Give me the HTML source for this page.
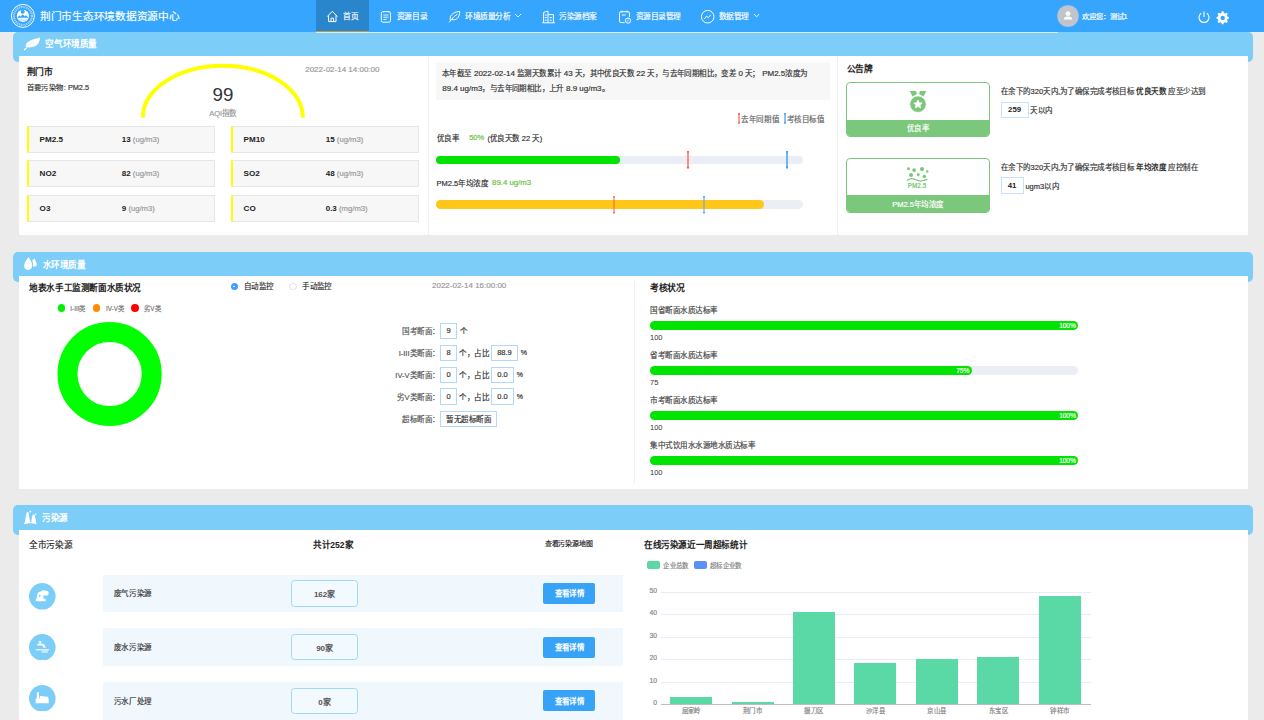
<!DOCTYPE html>
<html lang="zh-CN"><head><meta charset="utf-8">
<style>
*{margin:0;padding:0;box-sizing:border-box}
html,body{width:1264px;height:720px;overflow:hidden;background:#ebebeb;font-family:"Liberation Sans",sans-serif;color:#333}
.a{position:absolute}
.t{position:absolute;white-space:nowrap;line-height:12px;-webkit-text-stroke:0.18px currentColor}
.t b,.t[style*=bold]{-webkit-text-stroke:0}
.band{position:absolute;left:13px;width:1240px;height:30px;background:#7ccdf8;border-radius:5px}
.panel{position:absolute;left:19px;width:1229px;background:#fff}
#hdr{position:absolute;left:0;top:0;width:1264px;height:32px;background:#35a5fd}
</style></head><body>
<div id="hdr">
<svg class="a" style="left:0;top:0" width="40" height="32" viewBox="0 0 40 32">
<circle cx="22.9" cy="15.9" r="11.5" fill="none" stroke="#fff" stroke-width="1"/>
<circle cx="22.9" cy="15.9" r="9" fill="none" stroke="#f0f8ff" stroke-width="2.3" stroke-dasharray="1.1 0.8" opacity="0.62"/>
<circle cx="22.9" cy="15.9" r="6.9" fill="#35a5fd"/>
<circle cx="22.9" cy="15.9" r="6.1" fill="#fff"/>
<circle cx="22.7" cy="11.8" r="2" fill="#35a5fd"/>
<path d="M17.2 17.8 L19.2 15.4 L20.6 16.4 L22.6 14.2 L24.6 16.2 L26 15.2 L28.6 17.8 Z" fill="#35a5fd"/>
<path d="M18.4 19.2 H27.4 M19.4 20.6 H26.4" stroke="#9dd2fe" stroke-width="0.6"/>
</svg>
<div class="a" style="left:316px;top:0;width:53px;height:31px;background:#2a86cc"></div>
<div class="a" style="left:316px;top:32px;width:741.5px;height:1px;background:#e2eaef;z-index:2"></div>
<div class="a" style="left:316px;top:31px;width:53px;height:1px;background:#c49a3e"></div>
<svg class="a" style="left:326px;top:10px" width="13" height="13" viewBox="0 0 13 13">
<path d="M1.2 6.6 L6.3 1.3 L11.4 6.6 M2.6 5.4 V11.6 H10 V5.4 M5 11.6 V8.2 H7.6 V11.6" fill="none" stroke="#fff" stroke-width="1" stroke-linejoin="round"/>
</svg>
<svg class="a" style="left:380px;top:10px" width="12" height="13" viewBox="0 0 12 13">
<rect x="1.3" y="1.6" width="9.2" height="10.6" rx="1.6" fill="none" stroke="#fff" stroke-width="1"/>
<path d="M3.6 1 V2.4 M8.2 1 V2.4 M3.4 5 H8.4 M3.4 7.2 H8.4 M3.4 9.4 H6.6" stroke="#fff" stroke-width="0.9"/>
</svg>
<svg class="a" style="left:448px;top:10px" width="13" height="13" viewBox="0 0 13 13">
<path d="M1.3 12 L3.6 9.4 M2.4 10.6 C1 7 3.5 2 11.8 1.4 C11.6 7.6 8.6 11 3.4 9.6 M3.6 9.4 C5.4 7 7 5.6 9.2 4.4" fill="none" stroke="#fff" stroke-width="1" stroke-linecap="round"/>
</svg>
<svg class="a" style="left:514px;top:13px" width="8" height="5" viewBox="0 0 8 5"><path d="M1 1 L4 4 L7 1" fill="none" stroke="#fff" stroke-width="0.9"/></svg>
<svg class="a" style="left:541px;top:10px" width="15" height="14" viewBox="0 0 15 14">
<path d="M1.3 12.8 H13.8 M2.6 12.8 V2.4 L7 1 V12.8 M7 4.6 H12.4 V12.8 M3.8 5 H5.8 M3.8 7.6 H5.8 M3.8 10.2 H5.8 M8.6 7.6 H10.8 M8.6 10.2 H10.8" fill="none" stroke="#fff" stroke-width="1"/>
</svg>
<svg class="a" style="left:618px;top:10px" width="14" height="14" viewBox="0 0 14 14">
<path d="M6.5 12.6 H3 A1.5 1.5 0 0 1 1.5 11.1 V3.2 A1.5 1.5 0 0 1 3 1.7 H10 A1.5 1.5 0 0 1 11.5 3.2 V7" fill="none" stroke="#fff" stroke-width="1"/>
<path d="M4 0.6 V2.6 M9 0.6 V2.6 M3.8 5 H7.6" stroke="#fff" stroke-width="1"/>
<circle cx="10" cy="10.6" r="2.6" fill="none" stroke="#fff" stroke-width="1"/>
<path d="M8.9 11.4 L10.9 9.6" stroke="#fff" stroke-width="0.8"/>
</svg>
<svg class="a" style="left:700px;top:9px" width="16" height="16" viewBox="0 0 16 16">
<circle cx="7.7" cy="7.7" r="6.3" fill="none" stroke="#fff" stroke-width="1"/>
<path d="M4.4 9.8 L6.6 7.2 L8.2 8.6 L10.8 5.8" fill="none" stroke="#fff" stroke-width="1"/>
</svg>
<svg class="a" style="left:753px;top:13px" width="8" height="5" viewBox="0 0 8 5"><path d="M1 1 L3.6 3.8 L6.2 1" fill="none" stroke="#fff" stroke-width="0.9"/></svg>
<svg class="a" style="left:1057px;top:5px" width="23" height="23" viewBox="0 0 23 23">
<circle cx="11" cy="11" r="10.8" fill="#c0c4cc"/>
<circle cx="11" cy="8.6" r="2.4" fill="#fff"/>
<path d="M6.8 14.6 C6.8 12.2 8.6 11.6 11 11.6 C13.4 11.6 15.2 12.2 15.2 14.6 Z" fill="#fff"/>
</svg>
<svg class="a" style="left:1197px;top:10px" width="14" height="14" viewBox="0 0 14 14">
<path d="M4.2 3.3 A5 5 0 1 0 9.8 3.3" fill="none" stroke="#fff" stroke-width="1.15"/>
<path d="M7 1.6 V7" stroke="#fff" stroke-width="1.15"/>
</svg>
<svg class="a" style="left:1216px;top:11px" width="14" height="14" viewBox="0 0 14 14">
<path d="M6 0.4 H8 L8.4 2.2 L9.9 2.9 L11.5 1.9 L12.9 3.3 L11.9 4.9 L12.5 6.4 L14 6.8 V8.8 L12.5 9.2 L11.9 10.7 L12.9 12.3 L11.5 13.7 L9.9 12.7 L8.4 13.4 L8 15 H6 L5.6 13.4 L4.1 12.7 L2.5 13.7 L1.1 12.3 L2.1 10.7 L1.5 9.2 L0 8.8 V6.8 L1.5 6.4 L2.1 4.9 L1.1 3.3 L2.5 1.9 L4.1 2.9 L5.6 2.2 Z" transform="translate(0.5 0) scale(0.88)" fill="#fff"/>
<circle cx="6.7" cy="6.9" r="2.2" fill="#35a5fd"/>
</svg>
</div>
<div class="t" style="left:40px;top:9.90px;font-size:10.7px;color:#fff;"><span style="letter-spacing:-0.27px;">荆门市生态环境数据资源中心</span></div>
<div class="t" style="left:343.1px;top:11.30px;font-size:7.7px;color:#fff;"><span style="letter-spacing:-0.28px;">首页</span></div>
<div class="t" style="left:396.7px;top:11.30px;font-size:7.7px;color:#fff;"><span style="letter-spacing:-0.392px;">资源目录</span></div>
<div class="t" style="left:465px;top:11.30px;font-size:7.7px;color:#fff;"><span style="letter-spacing:-0.445px;">环境质量分析</span></div>
<div class="t" style="left:559px;top:11.30px;font-size:7.7px;color:#fff;"><span style="letter-spacing:-0.394px;">污染源档案</span></div>
<div class="t" style="left:635.6px;top:11.30px;font-size:7.7px;color:#fff;"><span style="letter-spacing:-0.513px;">资源目录管理</span></div>
<div class="t" style="left:718.5px;top:11.30px;font-size:7.7px;color:#fff;"><span style="letter-spacing:-0.494px;">数据管理</span></div>
<div class="t" style="left:1081.9px;top:11.30px;font-size:7.3px;color:#fff;"><span style="letter-spacing:-0.05px;">欢迎您：测试</span>1</div>
<div class="band" style="top:32px"></div>
<div class="panel" style="top:56px;height:179px"></div>
<div class="band" style="top:252px"></div>
<div class="panel" style="top:276px;height:213px"></div>
<div class="band" style="top:505px"></div>
<div class="panel" style="top:530px;height:190px"></div>
<svg class="a" style="left:23px;top:36px" width="18" height="16" viewBox="0 0 18 16">
<path d="M3.2 11.6 C2.2 9.4 3 7.4 5 6 C7.6 4 11 3.4 13.4 2.6 C15 2.1 16.2 1.8 17 1.2 C17 4.4 16 8 12.6 10 C9.6 11.6 6 11.2 3.2 11.6 Z" fill="#fff"/>
<path d="M3 12.2 L1.4 13.8" stroke="#fff" stroke-width="1.3" stroke-linecap="round"/>
<path d="M4.6 9.6 C6.4 8 8.6 7.2 11 6.6" fill="none" stroke="#b9e4fb" stroke-width="0.5"/>
</svg>
<div class="t" style="left:45.3px;top:37.90px;font-size:8.6px;color:#fff;font-weight:bold;"><span style="letter-spacing:-0.37px;">空气环境质量</span></div>
<svg class="a" style="left:23px;top:256px" width="15" height="15" viewBox="0 0 15 15">
<path d="M11.4 2.4 C12.4 4.2 13.8 6.4 13.8 8.4 C13.8 9.8 13 10.6 11.6 10.6 L10 10.6 C10.4 8.4 10 6 9 4.8 Z" fill="#fff"/>
<path d="M5.5 1 C7 3.6 9.2 6.2 9.2 9.6 C9.2 12.2 7.4 14 5.1 14 C2.8 14 1.1 12.2 1.1 9.8 C1.1 6.4 4 3.6 5.5 1 Z" fill="#fff" stroke="#7ccdf8" stroke-width="1.1" paint-order="stroke"/>
<path d="M3.8 11.6 C4.4 12.4 5.4 12.6 6.4 12.4" fill="none" stroke="#d6f0fd" stroke-width="0.6"/>
</svg>
<div class="t" style="left:42.7px;top:258.60px;font-size:8.6px;color:#fff;font-weight:bold;"><span style="letter-spacing:-0.44px;">水环境质量</span></div>
<svg class="a" style="left:23px;top:510px" width="15" height="16" viewBox="0 0 15 16">
<path d="M1.2 14.2 C1.8 11.6 2.6 8 3 5.4 C3.4 3.6 3.6 2.6 4.4 2 L5.6 2.2 C6 5.6 6.6 9.6 7.2 12.2 L8.2 12.2 C8.6 9.6 9.2 6.4 9.6 4.8 L11.8 4.6 C12.2 7.6 12.8 11.2 13.6 14.2 C9.4 13 5.4 13 1.2 14.2 Z" fill="#fff"/>
<circle cx="7.4" cy="1.6" r="0.9" fill="#fff"/><circle cx="12.6" cy="4.2" r="0.8" fill="#fff"/>
<path d="M3.1 6.4 H4.6" stroke="#d6f0fd" stroke-width="0.5"/>
</svg>
<div class="t" style="left:42.2px;top:512.40px;font-size:8.6px;color:#fff;font-weight:bold;"><span style="letter-spacing:-0.5px;">污染源</span></div>
<div class="a" style="left:428px;top:56px;width:1px;height:179px;background:#f0f0f0;"></div>
<div class="a" style="left:837px;top:56px;width:1px;height:179px;background:#f0f0f0;"></div>
<div class="t" style="left:26.6px;top:66.00px;font-size:8.75px;color:#222;font-weight:bold;"><span style="letter-spacing:-0.16px;">荆门市</span></div>
<div class="t" style="left:26.6px;top:82.30px;font-size:7.3px;color:#333;"><span style="letter-spacing:0.45px;">首要污染物</span>: PM2.5</div>
<svg class="a" style="left:130px;top:56px" width="190" height="70" viewBox="0 0 190 70">
<path d="M12.8 61.7 A80 52 0 0 1 172.8 61.7" fill="none" stroke="#ffff00" stroke-width="4"/>
</svg>
<div class="t" style="left:212.5px;top:85px;font-size:18.75px;line-height:20px;color:#333;-webkit-text-stroke:0">99</div>
<div class="t" style="left:209.2px;top:107.90px;font-size:7.5px;color:#999;">AQI<span style="letter-spacing:0.3px;">指数</span></div>
<div class="t" style="left:305.2px;top:63.60px;font-size:8px;color:#999;">2022-02-14 14:00:00</div>
<div class="a" style="left:27px;top:126px;width:188.3px;height:27px;background:#f7f7f7;border:1px solid #e6e6e6;border-left:2px solid #ffff00"></div>
<div class="t" style="left:39.6px;top:133.80px;font-size:8.1px;color:#222;font-weight:bold;">PM2.5</div>
<div class="t" style="left:121.7px;top:133.8px;font-size:8px;color:#222"><b>13</b> <span style="color:#999;font-size:7.7px">(ug/m3)</span></div>
<div class="a" style="left:231px;top:126px;width:188.3px;height:27px;background:#f7f7f7;border:1px solid #e6e6e6;border-left:2px solid #ffff00"></div>
<div class="t" style="left:243.6px;top:133.80px;font-size:8.1px;color:#222;font-weight:bold;">PM10</div>
<div class="t" style="left:325.7px;top:133.8px;font-size:8px;color:#222"><b>15</b> <span style="color:#999;font-size:7.7px">(ug/m3)</span></div>
<div class="a" style="left:27px;top:160px;width:188.3px;height:27px;background:#f7f7f7;border:1px solid #e6e6e6;border-left:2px solid #ffff00"></div>
<div class="t" style="left:39.6px;top:167.80px;font-size:8.1px;color:#222;font-weight:bold;">NO2</div>
<div class="t" style="left:121.7px;top:167.8px;font-size:8px;color:#222"><b>82</b> <span style="color:#999;font-size:7.7px">(ug/m3)</span></div>
<div class="a" style="left:231px;top:160px;width:188.3px;height:27px;background:#f7f7f7;border:1px solid #e6e6e6;border-left:2px solid #ffff00"></div>
<div class="t" style="left:243.6px;top:167.80px;font-size:8.1px;color:#222;font-weight:bold;">SO2</div>
<div class="t" style="left:325.7px;top:167.8px;font-size:8px;color:#222"><b>48</b> <span style="color:#999;font-size:7.7px">(ug/m3)</span></div>
<div class="a" style="left:27px;top:195px;width:188.3px;height:27px;background:#f7f7f7;border:1px solid #e6e6e6;border-left:2px solid #ffff00"></div>
<div class="t" style="left:39.6px;top:202.80px;font-size:8.1px;color:#222;font-weight:bold;">O3</div>
<div class="t" style="left:121.7px;top:202.8px;font-size:8px;color:#222"><b>9</b> <span style="color:#999;font-size:7.7px">(ug/m3)</span></div>
<div class="a" style="left:231px;top:195px;width:188.3px;height:27px;background:#f7f7f7;border:1px solid #e6e6e6;border-left:2px solid #ffff00"></div>
<div class="t" style="left:243.6px;top:202.80px;font-size:8.1px;color:#222;font-weight:bold;">CO</div>
<div class="t" style="left:325.7px;top:202.8px;font-size:8px;color:#222"><b>0.3</b> <span style="color:#999;font-size:7.7px">(mg/m3)</span></div>
<div class="a" style="left:436px;top:62px;width:394px;height:38px;background:#f7f7f7;"></div>
<div class="t" style="left:442.1px;top:68.30px;font-size:8px;color:#333;"><span style="letter-spacing:0.4px;font-size:7.5px;">本年截至</span> 2022-02-14 <span style="letter-spacing:0.4px;font-size:7.5px;">监测天数累计</span> 43 <span style="letter-spacing:0.4px;font-size:7.5px;">天，其中优良天数</span> 22 <span style="letter-spacing:0.4px;font-size:7.5px;">天，与去年同期相比，变差</span> 0 <span style="letter-spacing:0.4px;font-size:7.5px;">天；</span> PM2.5<span style="letter-spacing:0.4px;font-size:7.5px;">浓度为</span></div>
<div class="t" style="left:442.3px;top:82.50px;font-size:8px;color:#333;">89.4 ug/m3<span style="letter-spacing:0.4px;font-size:7.5px;">，与去年同期相比，上升</span> 8.9 ug/m3<span style="letter-spacing:0.4px;font-size:7.5px;">。</span></div>
<svg class="a" style="left:736.3px;top:112.2px" width="6" height="12.700000000000003" viewBox="0 0 6 12.700000000000003"><rect x="2.45" y="1" width="1.1" height="10.700000000000003" fill="#f5584a"/><ellipse cx="3" cy="1.9" rx="0.8" ry="0.9" fill="#f5584a"/><ellipse cx="3" cy="10.800000000000002" rx="0.8" ry="0.9" fill="#f5584a"/></svg>
<div class="t" style="left:741.3px;top:114.40px;font-size:7.5px;color:#666;"><span style="letter-spacing:0.6px;">去年同期值</span></div>
<svg class="a" style="left:781.6px;top:112.2px" width="6" height="12.700000000000003" viewBox="0 0 6 12.700000000000003"><rect x="2.4" y="1" width="1.2" height="10.700000000000003" fill="#3a9dfa"/><ellipse cx="3" cy="1.9" rx="0.8" ry="0.9" fill="#3a9dfa"/><ellipse cx="3" cy="10.800000000000002" rx="0.8" ry="0.9" fill="#3a9dfa"/></svg>
<div class="t" style="left:786.9px;top:114.40px;font-size:7.5px;color:#666;"><span style="letter-spacing:0.45px;">考核目标值</span></div>
<div class="t" style="left:436.6px;top:133.10px;font-size:7.5px;color:#333;"><span style="letter-spacing:0.55px;">优良率</span></div>
<div class="t" style="left:469.2px;top:132.20px;font-size:7.5px;color:#67c23a;">50%</div>
<div class="t" style="left:487.4px;top:133.10px;font-size:7.5px;color:#333;">(<span style="letter-spacing:0.45px;">优良天数</span> 22 <span style="letter-spacing:0.45px;">天</span>)</div>
<div class="a" style="left:436px;top:156px;width:367px;height:8px;border-radius:4px;background:#ebeef5"></div>
<div class="a" style="left:436px;top:156px;width:184px;height:8px;border-radius:4px;background:#00e400"></div>
<svg class="a" style="left:685.4px;top:150.3px" width="6" height="19.399999999999977" viewBox="0 0 6 19.399999999999977"><rect x="2.4" y="1" width="1.2" height="17.399999999999977" fill="#f5584a"/><ellipse cx="3" cy="1.9" rx="1.1" ry="0.9" fill="#f5584a"/><ellipse cx="3" cy="17.49999999999998" rx="1.1" ry="0.9" fill="#f5584a"/></svg>
<svg class="a" style="left:783.6px;top:150.3px" width="6" height="19.399999999999977" viewBox="0 0 6 19.399999999999977"><rect x="2.3" y="1" width="1.4" height="17.399999999999977" fill="#3a9dfa"/><ellipse cx="3" cy="1.9" rx="1.1" ry="0.9" fill="#3a9dfa"/><ellipse cx="3" cy="17.49999999999998" rx="1.1" ry="0.9" fill="#3a9dfa"/></svg>
<div class="t" style="left:436.6px;top:177.80px;font-size:7.5px;color:#333;">PM2.5<span style="letter-spacing:0.5px;">年均浓度</span></div>
<div class="t" style="left:492.1px;top:176.90px;font-size:7.8px;color:#67c23a;">89.4 ug/m3</div>
<div class="a" style="left:436px;top:200px;width:367px;height:9px;border-radius:4.5px;background:#ebeef5"></div>
<div class="a" style="left:436px;top:200px;width:328px;height:9px;border-radius:4.5px;background:#ffc71a"></div>
<svg class="a" style="left:610.9px;top:194.7px" width="6" height="19.400000000000006" viewBox="0 0 6 19.400000000000006"><rect x="2.55" y="1" width="0.9" height="17.400000000000006" fill="#f5584a"/><ellipse cx="3" cy="1.9" rx="0.8" ry="0.9" fill="#f5584a"/><ellipse cx="3" cy="17.500000000000007" rx="0.8" ry="0.9" fill="#f5584a"/></svg>
<svg class="a" style="left:701px;top:194.7px" width="6" height="19.400000000000006" viewBox="0 0 6 19.400000000000006"><rect x="2.55" y="1" width="0.9" height="17.400000000000006" fill="#3a9dfa"/><ellipse cx="3" cy="1.9" rx="0.8" ry="0.9" fill="#3a9dfa"/><ellipse cx="3" cy="17.500000000000007" rx="0.8" ry="0.9" fill="#3a9dfa"/></svg>
<div class="t" style="left:846.7px;top:62.60px;font-size:8.75px;color:#222;font-weight:bold;"><span style="letter-spacing:-0.3px;">公告牌</span></div>
<div class="a" style="left:846px;top:82px;width:144px;height:55px;border:1px solid #7bc77b;border-radius:4px;background:#fff;overflow:hidden"><div class="a" style="left:0;top:37px;width:142px;height:17px;background:#7bc77b"></div></div>
<div class="t" style="left:718px;width:400px;text-align:center;top:123.40px;font-size:7.5px;color:#fff;"><span style="letter-spacing:0.5px;">优良率</span></div>
<div class="t" style="left:1000.9px;top:86px;font-size:7.5px;color:#333"><span style="letter-spacing:0.42px;">在余下的</span>320<span style="letter-spacing:0.42px;">天内</span>,<span style="letter-spacing:0.42px;">为了确保完成考核目标</span> <b><span style="letter-spacing:0.5px;">优良天数</span></b> <span style="letter-spacing:0.42px;">应至少达到</span></div>
<div class="a" style="left:1000.6px;top:101.8px;width:28px;height:16.6px;border:1px solid #c6e2ff;background:#fff"></div>
<div class="t" style="left:814.6px;width:400px;text-align:center;top:104.10px;font-size:7.8px;color:#222;font-weight:bold;">259</div>
<div class="t" style="left:1030.3999999999999px;top:105.00px;font-size:7.5px;color:#333;"><span style="letter-spacing:0.4px;">天以内</span></div>
<div class="a" style="left:846px;top:158px;width:144px;height:55px;border:1px solid #7bc77b;border-radius:4px;background:#fff;overflow:hidden"><div class="a" style="left:0;top:36px;width:142px;height:18px;background:#7bc77b"></div></div>
<div class="t" style="left:718px;width:400px;text-align:center;top:198.90px;font-size:7.5px;color:#fff;">PM2.5<span style="letter-spacing:0.5px;">年均浓度</span></div>
<div class="t" style="left:1000.9px;top:162.2px;font-size:7.5px;color:#333"><span style="letter-spacing:0.42px;">在余下的</span>320<span style="letter-spacing:0.42px;">天内</span>,<span style="letter-spacing:0.42px;">为了确保完成考核目标</span> <b><span style="letter-spacing:0.5px;">年均浓度</span></b> <span style="letter-spacing:0.42px;">应控制在</span></div>
<div class="a" style="left:1000.6px;top:177.3px;width:23px;height:16.9px;border:1px solid #c6e2ff;background:#fff"></div>
<div class="t" style="left:812.1px;width:400px;text-align:center;top:179.75px;font-size:7.8px;color:#222;font-weight:bold;">41</div>
<div class="t" style="left:1025.4px;top:180.65px;font-size:7.5px;color:#333;">ugm3<span style="letter-spacing:0.4px;">以内</span></div>
<svg class="a" style="left:906px;top:89px" width="24" height="26" viewBox="0 0 24 26">
<path d="M3.8 2 H9.9 L10.9 5.1 L6.5 7.4 Z M14 2 H20.3 L17.6 7.4 L13 5.1 Z" fill="#7bc77b"/>
<circle cx="12" cy="15.2" r="8.2" fill="#7bc77b" stroke="#fff" stroke-width="0.6"/>
<path d="M12 11 L13.3 13.8 L16.2 14.1 L14 16.1 L14.7 19 L12 17.5 L9.3 19 L10 16.1 L7.8 14.1 L10.7 13.8 Z" fill="#fff" stroke="#fff" stroke-width="0.7" stroke-linejoin="round"/>
</svg>
<svg class="a" style="left:905px;top:165px" width="26" height="20" viewBox="0 0 26 20">
<circle cx="3.46" cy="3.67" r="1.46" fill="#7bc77b"/><circle cx="9.1" cy="5.1" r="1.9" fill="#7bc77b"/>
<circle cx="17" cy="4.1" r="2.1" fill="#7bc77b"/><circle cx="22.2" cy="6.4" r="1.25" fill="#7bc77b"/>
<circle cx="6" cy="9.9" r="2" fill="#7bc77b"/><circle cx="13.25" cy="9.7" r="1.46" fill="#7bc77b"/>
<circle cx="19.3" cy="11.4" r="1.75" fill="#7bc77b"/>
<path d="M2.4 15.3 C4.6 13.6 6.8 13.2 9.4 14.2 C11.8 15.2 13.8 16.2 16 16 C18.4 15.8 20.4 15.2 22 14.4" fill="none" stroke="#7bc77b" stroke-width="1.25" stroke-linecap="round"/>
</svg>
<div class="t" style="left:717px;width:400px;text-align:center;top:179.60px;font-size:6.4px;color:#7bc77b;font-weight:bold;">PM2.5</div>
<div class="t" style="left:29.3px;top:282.40px;font-size:8.6px;color:#222;font-weight:bold;"><span style="letter-spacing:-0.42px;">地表水手工监测断面水质状况</span></div>
<div class="a" style="left:57.5px;top:304.1px;width:7.8px;height:7.8px;border-radius:50%;background:#00f000"></div>
<div class="t" style="left:70.3px;top:302.90px;font-size:6.3px;color:#777;">I-III<span style="letter-spacing:0.3px;">类</span></div>
<div class="a" style="left:92.6px;top:304.1px;width:7.8px;height:7.8px;border-radius:50%;background:#ff8c00"></div>
<div class="t" style="left:106px;top:302.90px;font-size:6.3px;color:#777;">IV-V<span style="letter-spacing:0.3px;">类</span></div>
<div class="a" style="left:130.9px;top:304.1px;width:7.8px;height:7.8px;border-radius:50%;background:#ff0000"></div>
<div class="t" style="left:144px;top:302.90px;font-size:6.3px;color:#777;"><span style="letter-spacing:0.3px;">劣</span>V<span style="letter-spacing:0.3px;">类</span></div>
<svg class="a" style="left:55px;top:320px" width="110" height="110" viewBox="0 0 110 110">
<circle cx="54.6" cy="54" r="42.1" fill="none" stroke="#00ff00" stroke-width="20"/>
</svg>
<div class="a" style="left:230.6px;top:282.9px;width:7.3px;height:7.3px;border-radius:50%;background:#409eff"></div>
<div class="a" style="left:233.3px;top:285.6px;width:1.9px;height:1.9px;border-radius:50%;background:#fff"></div>
<div class="t" style="left:244px;top:281.40px;font-size:7.5px;color:#333;"><span style="letter-spacing:0.3px;">自动监控</span></div>
<div class="a" style="left:289.3px;top:282.9px;width:7.3px;height:7.3px;border-radius:50%;border:0.7px solid #dcdfe6;background:#fff"></div>
<div class="t" style="left:302.4px;top:281.40px;font-size:7.5px;color:#333;"><span style="letter-spacing:0.35px;">手动监控</span></div>
<div class="t" style="left:432px;top:280.40px;font-size:8px;color:#999;">2022-02-14 16:00:00</div>
<div class="t" style="right:824.5px;top:326.10px;font-size:7.5px;color:#555;"><span style="letter-spacing:0.5px;">国考断面：</span></div>
<div class="a" style="left:440.3px;top:322.8px;width:16.4px;height:16.6px;border:1px solid #b3d8ff;background:#fff"></div>
<div class="t" style="left:248.5px;width:400px;text-align:center;top:325.10px;font-size:7.5px;color:#333;">9</div>
<div class="t" style="left:459.7px;top:326.10px;font-size:7.5px;color:#333;"><span style="letter-spacing:0.5px;">个</span></div>
<div class="t" style="right:824.5px;top:348.20px;font-size:7.5px;color:#555;">I-III<span style="letter-spacing:0.5px;">类断面：</span></div>
<div class="a" style="left:440.3px;top:344.90000000000003px;width:16.4px;height:16.6px;border:1px solid #b3d8ff;background:#fff"></div>
<div class="t" style="left:248.5px;width:400px;text-align:center;top:347.20px;font-size:7.5px;color:#333;">8</div>
<div class="t" style="left:459px;top:348.20px;font-size:7.5px;color:#333;"><span style="letter-spacing:0.6px;">个，占比</span></div>
<div class="a" style="left:491.2px;top:344.90000000000003px;width:26.6px;height:16.6px;border:1px solid #b3d8ff;background:#fff"></div>
<div class="t" style="left:304.5px;width:400px;text-align:center;top:347.20px;font-size:7.5px;color:#333;">88.9</div>
<div class="t" style="left:520.8px;top:347.30px;font-size:7px;color:#333;">%</div>
<div class="t" style="right:824.5px;top:370.20px;font-size:7.5px;color:#555;">IV-V<span style="letter-spacing:0.5px;">类断面：</span></div>
<div class="a" style="left:440.3px;top:366.90000000000003px;width:16.4px;height:16.6px;border:1px solid #b3d8ff;background:#fff"></div>
<div class="t" style="left:248.5px;width:400px;text-align:center;top:369.20px;font-size:7.5px;color:#333;">0</div>
<div class="t" style="left:459px;top:370.20px;font-size:7.5px;color:#333;"><span style="letter-spacing:0.6px;">个，占比</span></div>
<div class="a" style="left:491.2px;top:366.90000000000003px;width:22.6px;height:16.6px;border:1px solid #b3d8ff;background:#fff"></div>
<div class="t" style="left:302.5px;width:400px;text-align:center;top:369.20px;font-size:7.5px;color:#333;">0.0</div>
<div class="t" style="left:516.8px;top:369.30px;font-size:7px;color:#333;">%</div>
<div class="t" style="right:824.5px;top:391.60px;font-size:7.5px;color:#555;"><span style="letter-spacing:0.5px;">劣</span>V<span style="letter-spacing:0.5px;">类断面：</span></div>
<div class="a" style="left:440.3px;top:388.3px;width:16.4px;height:16.6px;border:1px solid #b3d8ff;background:#fff"></div>
<div class="t" style="left:248.5px;width:400px;text-align:center;top:390.60px;font-size:7.5px;color:#333;">0</div>
<div class="t" style="left:459px;top:391.60px;font-size:7.5px;color:#333;"><span style="letter-spacing:0.6px;">个，占比</span></div>
<div class="a" style="left:491.2px;top:388.3px;width:22.6px;height:16.6px;border:1px solid #b3d8ff;background:#fff"></div>
<div class="t" style="left:302.5px;width:400px;text-align:center;top:390.60px;font-size:7.5px;color:#333;">0.0</div>
<div class="t" style="left:516.8px;top:390.70px;font-size:7px;color:#333;">%</div>
<div class="t" style="right:824.5px;top:414.10px;font-size:7.5px;color:#555;"><span style="letter-spacing:0.5px;">超标断面：</span></div>
<div class="a" style="left:440.3px;top:410.6px;width:56.9px;height:16px;border:1px solid #b3d8ff;background:#fff"></div>
<div class="t" style="left:268.75px;width:400px;text-align:center;top:413.50px;font-size:7.5px;color:#333;"><span style="letter-spacing:0.5px;">暂无超标断面</span></div>
<div class="a" style="left:634px;top:281px;width:1px;height:202px;background:#f0f0f0;"></div>
<div class="t" style="left:649.9px;top:282.30px;font-size:8.75px;color:#222;font-weight:bold;"><span style="letter-spacing:-0.27px;">考核状况</span></div>
<div class="t" style="left:650px;top:304.50px;font-size:7.5px;color:#444;"><span style="letter-spacing:0.52px;">国省断面水质达标率</span></div>
<div class="a" style="left:650px;top:321px;width:428px;height:9px;border-radius:4.5px;background:#ebeef5"></div>
<div class="a" style="left:650px;top:321px;width:428px;height:9px;border-radius:4.5px;background:#00e400"></div>
<div class="t" style="left:875.6px;width:200px;text-align:right;top:319.5px;font-size:6.6px;color:#fff;letter-spacing:-0.15px">100%</div>
<div class="t" style="left:650px;top:332.00px;font-size:7.5px;color:#333;-webkit-text-stroke:0;">100</div>
<div class="t" style="left:650px;top:349.50px;font-size:7.5px;color:#444;"><span style="letter-spacing:0.52px;">省考断面水质达标率</span></div>
<div class="a" style="left:650px;top:366px;width:428px;height:9px;border-radius:4.5px;background:#ebeef5"></div>
<div class="a" style="left:650px;top:366px;width:321.5px;height:9px;border-radius:4.5px;background:#00e400"></div>
<div class="t" style="left:769.1px;width:200px;text-align:right;top:364.5px;font-size:6.6px;color:#fff;letter-spacing:-0.15px">75%</div>
<div class="t" style="left:650px;top:377.00px;font-size:7.5px;color:#333;-webkit-text-stroke:0;">75</div>
<div class="t" style="left:650px;top:394.50px;font-size:7.5px;color:#444;"><span style="letter-spacing:0.52px;">市考断面水质达标率</span></div>
<div class="a" style="left:650px;top:411px;width:428px;height:9px;border-radius:4.5px;background:#ebeef5"></div>
<div class="a" style="left:650px;top:411px;width:428px;height:9px;border-radius:4.5px;background:#00e400"></div>
<div class="t" style="left:875.6px;width:200px;text-align:right;top:409.5px;font-size:6.6px;color:#fff;letter-spacing:-0.15px">100%</div>
<div class="t" style="left:650px;top:422.00px;font-size:7.5px;color:#333;-webkit-text-stroke:0;">100</div>
<div class="t" style="left:650px;top:439.50px;font-size:7.5px;color:#444;"><span style="letter-spacing:0.52px;">集中式饮用水水源地水质达标率</span></div>
<div class="a" style="left:650px;top:456px;width:428px;height:9px;border-radius:4.5px;background:#ebeef5"></div>
<div class="a" style="left:650px;top:456px;width:428px;height:9px;border-radius:4.5px;background:#00e400"></div>
<div class="t" style="left:875.6px;width:200px;text-align:right;top:454.5px;font-size:6.6px;color:#fff;letter-spacing:-0.15px">100%</div>
<div class="t" style="left:650px;top:467.00px;font-size:7.5px;color:#333;-webkit-text-stroke:0;">100</div>
<div class="t" style="left:29.3px;top:539.40px;font-size:8.6px;color:#222;-webkit-text-stroke:0.15px #222;"><span style="letter-spacing:-0.4px;">全市污染源</span></div>
<div class="t" style="left:313.3px;top:539.20px;font-size:8.6px;color:#222;font-weight:bold;"><span style="letter-spacing:-0.5px;">共计</span>252<span style="letter-spacing:-0.5px;">家</span></div>
<div class="t" style="left:544.8px;top:537.60px;font-size:6.9px;color:#222;"><span style="letter-spacing:-0.15px;">查看污染源地图</span></div>
<div class="a" style="left:103.3px;top:574.6px;width:519.9px;height:37.69999999999993px;background:#f0f8fe;"></div>
<svg class="a" style="left:29.3px;top:582.95px" width="26.6" height="26.6" viewBox="0 0 20 20" ><circle cx="10" cy="10" r="10" fill="#7ccdf8"/><path d="M5.1 13.8 V11.8 H5.8 L6.2 8.4 L7.2 8.2 L7.8 10.8 L8.4 10.6 L8.8 8.6 L10.6 8.8 L11 11.8 H12.5 V13.8 Z" fill="#fff"/><path d="M6.6 9.2 C6 7.8 7.2 6.4 8.6 6.6 C9.2 5.4 11.6 5 12.8 5.8 C14.4 5.8 15.2 7 14.6 8.4 C14.2 9.6 12.6 9.8 11.2 9.2 C10 9.6 8.8 9.4 8.2 8.8 C7.6 9.2 7 9.4 6.6 9.2 Z" fill="#fff"/></svg>
<div class="t" style="left:113.75px;top:588.35px;font-size:7.5px;color:#333;"><span style="letter-spacing:0.6px;">废气污染源</span></div>
<div class="a" style="left:291.2px;top:580.25px;width:66.6px;height:26.6px;border:1px solid #a0d8f8;border-radius:3.5px;background:#f3faff"></div>
<div class="t" style="left:124.39999999999998px;width:400px;text-align:center;top:589.45px;font-size:8px;color:#555;font-weight:bold;">162<span style="letter-spacing:-0.4px;">家</span></div>
<div class="a" style="left:543.4px;top:582.95px;width:52.1px;height:21px;border-radius:2px;background:#36a3f7"></div>
<div class="t" style="left:369.45000000000005px;width:400px;text-align:center;top:588.35px;font-size:7.5px;color:#fff;font-weight:bold;"><span style="letter-spacing:0.4px;">查看详情</span></div>
<div class="a" style="left:103.3px;top:628.3px;width:519.9px;height:37.5px;background:#f0f8fe;"></div>
<svg class="a" style="left:29.3px;top:633.7px" width="26.6" height="26.6" viewBox="0 0 20 20" ><circle cx="10" cy="10" r="10" fill="#7ccdf8"/><path d="M5.1 11.5 H15.2 V12.3 H5.1 Z" fill="#fff"/><path d="M9.4 12.3 H14.2 V14.2 H9.4 Z" fill="#fff" opacity="0.55"/><path d="M6.2 7.3 H9.6 C11.4 7.3 12.4 8.4 12.4 10 V10.4 H10.6 V10 C10.6 9.2 10.2 8.6 9.4 8.6 H6.2 Z" fill="#fff"/><path d="M8 5.6 H8.8 V7.4 H8 Z M7.2 5.8 H9.6" fill="#fff" stroke="#fff" stroke-width="0.5"/></svg>
<div class="t" style="left:113.75px;top:641.95px;font-size:7.5px;color:#333;"><span style="letter-spacing:0.6px;">废水污染源</span></div>
<div class="a" style="left:291.2px;top:633.8499999999999px;width:66.6px;height:26.6px;border:1px solid #a0d8f8;border-radius:3.5px;background:#f3faff"></div>
<div class="t" style="left:124.39999999999998px;width:400px;text-align:center;top:643.05px;font-size:8px;color:#555;font-weight:bold;">90<span style="letter-spacing:-0.4px;">家</span></div>
<div class="a" style="left:543.4px;top:636.55px;width:52.1px;height:21px;border-radius:2px;background:#36a3f7"></div>
<div class="t" style="left:369.45000000000005px;width:400px;text-align:center;top:641.95px;font-size:7.5px;color:#fff;font-weight:bold;"><span style="letter-spacing:0.4px;">查看详情</span></div>
<div class="a" style="left:103.3px;top:681.9px;width:519.9px;height:37.700000000000045px;background:#f0f8fe;"></div>
<svg class="a" style="left:29.3px;top:684.7px" width="26.6" height="26.6" viewBox="0 0 20 20" ><circle cx="10" cy="10" r="10" fill="#7ccdf8"/><path d="M5 13.8 V10.1 H5.9 V5.4 H7.5 V10.1 H8.1 V8.3 L14.1 8.9 L14.8 10.1 V13.8 Z" fill="#fff"/></svg>
<div class="t" style="left:113.75px;top:695.65px;font-size:7.5px;color:#333;"><span style="letter-spacing:0.6px;">污水厂处理</span></div>
<div class="a" style="left:291.2px;top:687.55px;width:66.6px;height:26.6px;border:1px solid #a0d8f8;border-radius:3.5px;background:#f3faff"></div>
<div class="t" style="left:124.39999999999998px;width:400px;text-align:center;top:696.75px;font-size:8px;color:#555;font-weight:bold;">0<span style="letter-spacing:-0.4px;">家</span></div>
<div class="a" style="left:543.4px;top:690.25px;width:52.1px;height:21px;border-radius:2px;background:#36a3f7"></div>
<div class="t" style="left:369.45000000000005px;width:400px;text-align:center;top:695.65px;font-size:7.5px;color:#fff;font-weight:bold;"><span style="letter-spacing:0.4px;">查看详情</span></div>
<div class="t" style="left:644.1px;top:539.20px;font-size:8.6px;color:#222;font-weight:bold;"><span style="letter-spacing:-0.4px;">在线污染源近一周超标统计</span></div>
<div class="a" style="left:647px;top:561.3px;width:13px;height:7.4px;border-radius:2px;background:#5ad8a6"></div>
<div class="t" style="left:663.2px;top:559.90px;font-size:6.4px;color:#888;"><span style="letter-spacing:0.4px;">企业总数</span></div>
<div class="a" style="left:694.2px;top:561.3px;width:12.8px;height:7.4px;border-radius:2px;background:#5b8ff9"></div>
<div class="t" style="left:710px;top:559.90px;font-size:6.4px;color:#888;"><span style="letter-spacing:0.3px;">超标企业数</span></div>
<div class="a" style="left:660.5px;top:591.5px;width:430px;height:0.8px;background:#e8ecf4;"></div>
<div class="t" style="right:607px;top:584.90px;font-size:6.8px;color:#888;">50</div>
<div class="a" style="left:660.5px;top:614.0px;width:430px;height:0.8px;background:#e8ecf4;"></div>
<div class="t" style="right:607px;top:607.40px;font-size:6.8px;color:#888;">40</div>
<div class="a" style="left:660.5px;top:636.5px;width:430px;height:0.8px;background:#e8ecf4;"></div>
<div class="t" style="right:607px;top:629.90px;font-size:6.8px;color:#888;">30</div>
<div class="a" style="left:660.5px;top:659.0px;width:430px;height:0.8px;background:#e8ecf4;"></div>
<div class="t" style="right:607px;top:652.40px;font-size:6.8px;color:#888;">20</div>
<div class="a" style="left:660.5px;top:681.5px;width:430px;height:0.8px;background:#e8ecf4;"></div>
<div class="t" style="right:607px;top:674.90px;font-size:6.8px;color:#888;">10</div>
<div class="t" style="right:607px;top:697.40px;font-size:6.8px;color:#888;">0</div>
<div class="a" style="left:660.5px;top:704px;width:430px;height:1.1px;background:#bcbcc4;"></div>
<div class="a" style="left:670.2px;top:697.15px;width:42px;height:6.75px;background:#5ad8a6;"></div>
<div class="t" style="left:491.20000000000005px;width:400px;text-align:center;top:704.60px;font-size:6.4px;color:#888;"><span style="letter-spacing:0.4px;">屈家岭</span></div>
<div class="a" style="left:731.63px;top:701.65px;width:42px;height:2.25px;background:#5ad8a6;"></div>
<div class="t" style="left:552.63px;width:400px;text-align:center;top:704.60px;font-size:6.4px;color:#888;"><span style="letter-spacing:0.4px;">荆门市</span></div>
<div class="a" style="left:793.06px;top:611.65px;width:42px;height:92.25px;background:#5ad8a6;"></div>
<div class="t" style="left:614.0600000000001px;width:400px;text-align:center;top:704.60px;font-size:6.4px;color:#888;"><span style="letter-spacing:0.4px;">掇刀区</span></div>
<div class="a" style="left:854.49px;top:663.4px;width:42px;height:40.5px;background:#5ad8a6;"></div>
<div class="t" style="left:675.49px;width:400px;text-align:center;top:704.60px;font-size:6.4px;color:#888;"><span style="letter-spacing:0.4px;">沙洋县</span></div>
<div class="a" style="left:915.92px;top:658.9px;width:42px;height:45.0px;background:#5ad8a6;"></div>
<div class="t" style="left:736.9200000000001px;width:400px;text-align:center;top:704.60px;font-size:6.4px;color:#888;"><span style="letter-spacing:0.4px;">京山县</span></div>
<div class="a" style="left:977.35px;top:656.65px;width:42px;height:47.25px;background:#5ad8a6;"></div>
<div class="t" style="left:798.35px;width:400px;text-align:center;top:704.60px;font-size:6.4px;color:#888;"><span style="letter-spacing:0.4px;">东宝区</span></div>
<div class="a" style="left:1038.78px;top:595.9px;width:42px;height:108.0px;background:#5ad8a6;"></div>
<div class="t" style="left:859.78px;width:400px;text-align:center;top:704.60px;font-size:6.4px;color:#888;"><span style="letter-spacing:0.4px;">钟祥市</span></div>
</body></html>
